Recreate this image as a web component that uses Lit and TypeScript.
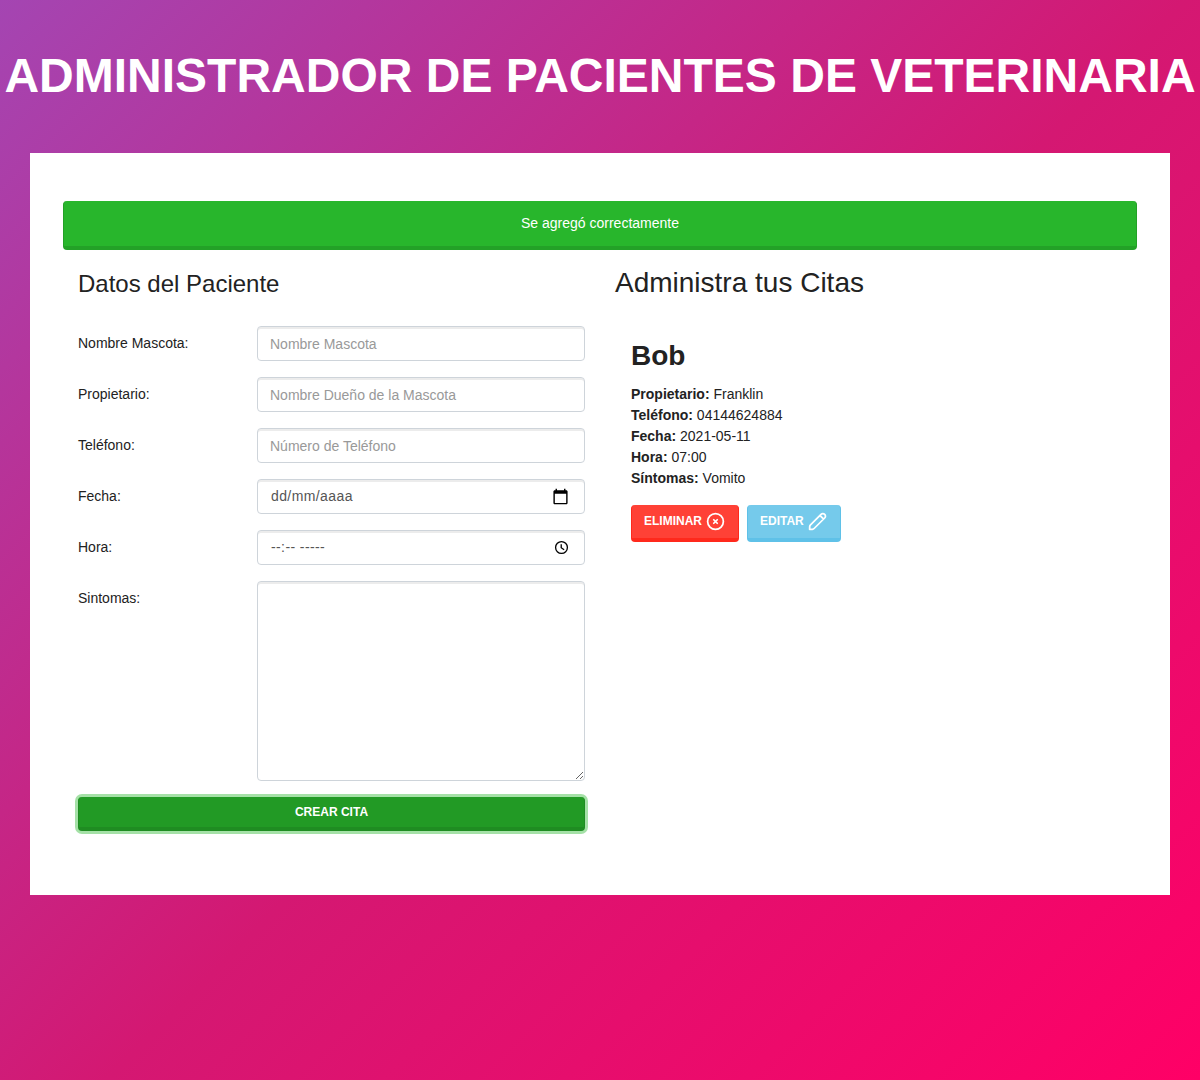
import { LitElement, html, css, svg } from "lit";
import { customElement } from "lit/decorators.js";

const details = [
  ["Propietario", "Franklin"],
  ["Teléfono", "04144624884"],
  ["Fecha", "2021-05-11"],
  ["Hora", "07:00"],
  ["Síntomas", "Vomito"],
];

const calendarIcon = html`<svg class="picker" viewBox="0 0 24 24" width="17" height="17">
  ${svg`<path d="M20 3h-1V1h-2v2H7V1H5v2H4c-1.1 0-2 .9-2 2v16c0 1.1.9 2 2 2h16c1.1 0 2-.9 2-2V5c0-1.1-.9-2-2-2zm0 18H4V8h16v13z"/>`}
</svg>`;
const clockIcon = html`<svg class="picker" viewBox="0 0 16 16" width="15" height="15">
  ${svg`<path fill="none" stroke="#000" stroke-width="1.4" d="M8 1.7a6.3 6.3 0 1 0 0 12.6a6.3 6.3 0 1 0 0-12.6zM7.7 4.4V8.2L10.8 10.4"/>`}
</svg>`;
const removeIcon = html`<svg class="icon" viewBox="0 0 24 24" width="21" height="21">
  ${svg`<path d="M10 10l4 4m0-4l-4 4m11-2a9 9 0 11-18 0 9 9 0 0118 0z"/>`}
</svg>`;
const pencilIcon = html`<svg class="icon" viewBox="0 0 24 24" width="21" height="21">
  ${svg`<path d="M16 3.8L4 15.9Q3.2 16.7 3.1 17.8L3 21L6.2 20.9Q7.3 20.8 8.1 20L20.2 8a2.95 2.95 0 0 0-4.2-4.2zM14.9 5.2l3.9 3.9"/>`}
</svg>`;

@customElement("app-root")
export class AppRoot extends LitElement {
  static styles = css`
    :host {
      display: block;
      box-sizing: border-box;
      min-height: 1080px;
      padding: 46px 0 0;
      background: linear-gradient(135deg, #a445b2 0%, #d41872 52%, #ff0066 100%);
      color: #222;
      font: 14px/21px "Liberation Sans", Arial, sans-serif;
    }
    *, *::before, *::after { box-sizing: border-box; }
    h1, h2, h3, p { margin: 0; font-weight: 400; }
    .title {
      font-size: 48px;
      line-height: 59px;
      font-weight: 700;
      color: #fff;
      text-align: center;
      text-transform: uppercase;
      white-space: nowrap;
    }
    .card {
      margin: 48px 30px 0;
      height: 742px;
      padding: 48px 33px 0;
      background: #fff;
    }
    .alert {
      height: 49px;
      padding: 12px;
      border: solid #23a127;
      border-width: 0 1px 4px;
      border-radius: 4px;
      background: #28b62c;
      color: #fff;
      text-align: center;
    }
    .columns { display: grid; grid-template-columns: 1fr 1fr; }
    .column { padding: 16px 15px 0; }
    .form-title { font-size: 24px; line-height: 29px; margin: 3px 0 28px; }
    .list-title { font-size: 28px; line-height: 34px; }
    .row {
      display: grid;
      grid-template-columns: 179px 1fr;
      margin-bottom: 16px;
    }
    .row label { padding-top: 7px; }
    .control {
      display: flex;
      align-items: center;
      justify-content: space-between;
      width: 100%;
      height: 35px;
      margin: 0;
      padding: 6px 12px;
      border: 1px solid #ced4da;
      border-radius: 4px;
      background: #fff;
      box-shadow: inset 0 2px 0 rgba(0, 0, 0, 0.075);
      color: #555;
      font: inherit;
      outline: none;
    }
    .control::placeholder { color: #999; opacity: 1; }
    .date { padding-left: 13px; padding-right: 15px; letter-spacing: 0.4px; }
    .area { display: block; height: 200px; resize: vertical; }
    .button {
      display: flex;
      align-items: center;
      justify-content: center;
      border: solid;
      border-width: 0 1px 4px;
      border-radius: 4px;
      color: #fff;
      font: 700 12px/18px "Liberation Sans", Arial, sans-serif;
      text-transform: uppercase;
    }
    .create {
      width: 100%;
      height: 34px;
      background: #229a25;
      border-color: #1f8c22;
      box-shadow: 0 0 0 3px #a5e1a7;
    }
    .appointment { padding: 39px 16px 0; }
    .name { font-size: 28px; line-height: 34px; font-weight: 700; margin-bottom: 11px; }
    .actions { display: flex; gap: 8px; margin-top: 16px; }
    .action { height: 37px; padding: 0 12px; gap: 3px; }
    .action span { padding-bottom: 2px; }
    .remove { background: #ff4136; border-color: #ff291c; }
    .edit { background: #75caeb; border-color: #5fc1e8; }
    .icon { fill: none; stroke: currentColor; stroke-width: 2; stroke-linecap: round; stroke-linejoin: round; }
  `;

  render() {
    return html`
      <h1 class="title">Administrador de pacientes de veterinaria</h1>
      <main class="card">
        <div class="alert">Se agregó correctamente</div>
        <div class="columns">
          <section class="column">
            <h2 class="form-title">Datos del Paciente</h2>
            <div class="row"><label>Nombre Mascota:</label><input class="control" placeholder="Nombre Mascota"></div>
            <div class="row"><label>Propietario:</label><input class="control" placeholder="Nombre Dueño de la Mascota"></div>
            <div class="row"><label>Teléfono:</label><input class="control" placeholder="Número de Teléfono"></div>
            <div class="row"><label>Fecha:</label><div class="control date"><span>dd/mm/aaaa</span>${calendarIcon}</div></div>
            <div class="row"><label>Hora:</label><div class="control date"><span>--:-- -----</span>${clockIcon}</div></div>
            <div class="row"><label>Sintomas:</label><textarea class="control area"></textarea></div>
            <button class="button create">Crear Cita</button>
          </section>
          <section class="column">
            <h2 class="list-title">Administra tus Citas</h2>
            <article class="appointment">
              <h3 class="name">Bob</h3>
              ${details.map(([label, value]) => html`<p><b>${label}:</b> ${value}</p>`)}
              <div class="actions">
                <button class="button action remove"><span>Eliminar</span>${removeIcon}</button>
                <button class="button action edit"><span>Editar</span>${pencilIcon}</button>
              </div>
            </article>
          </section>
        </div>
      </main>
    `;
  }
}
